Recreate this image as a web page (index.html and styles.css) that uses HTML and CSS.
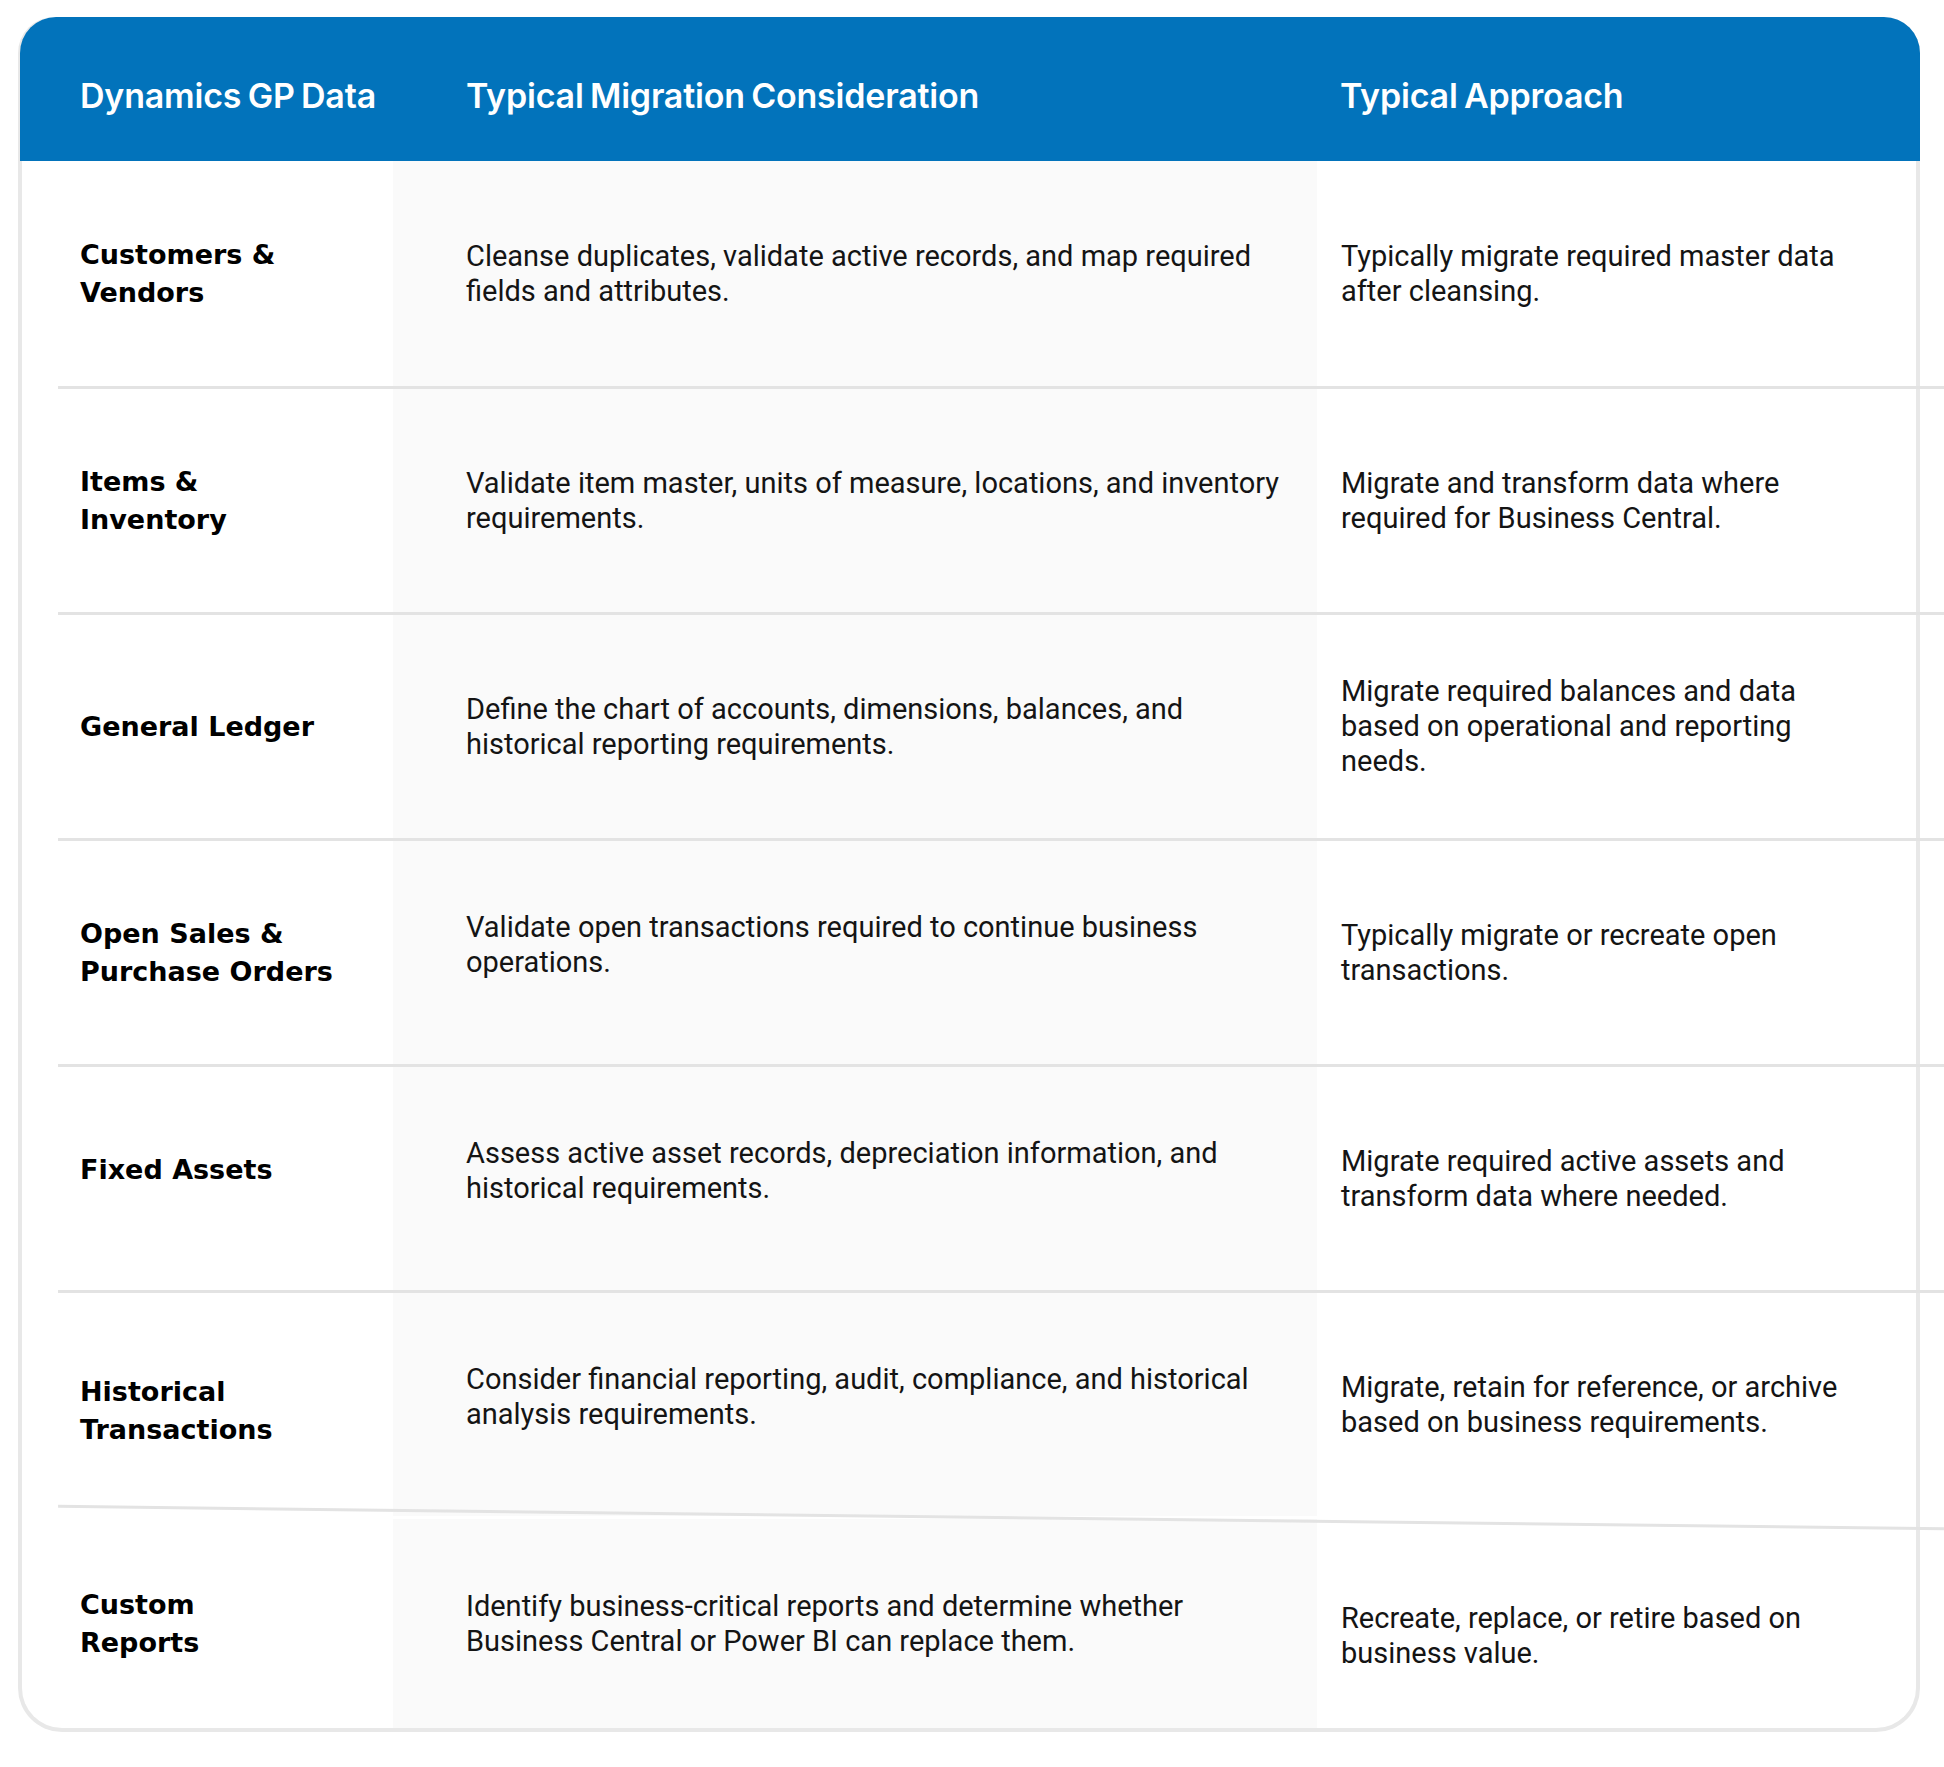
FILE: index.html
```html
<!DOCTYPE html>
<html lang="en">
<head>
<meta charset="utf-8">
<title>Dynamics GP Data Migration</title>
<link rel="stylesheet" href="styles.css">
</head>
<body>
<div class="card">
  <div class="thead">
    <div class="th th-1">Dynamics GP Data</div>
    <div class="th th-2">Typical Migration Consideration</div>
    <div class="th th-3">Typical Approach</div>
  </div>

  <div class="row row-first">
    <div class="cell c1">Customers &amp; Vendors</div>
    <div class="cell c2">Cleanse duplicates, validate active records, and map required fields and attributes.</div>
    <div class="cell c3">Typically migrate required master data after cleansing.</div>
  </div>
  <div class="divider"></div>

  <div class="row">
    <div class="cell c1">Items &amp; Inventory</div>
    <div class="cell c2">Validate item master, units of measure, locations, and inventory requirements.</div>
    <div class="cell c3">Migrate and transform data where required for Business Central.</div>
  </div>
  <div class="divider"></div>

  <div class="row">
    <div class="cell c1">General Ledger</div>
    <div class="cell c2">Define the chart of accounts, dimensions, balances, and historical reporting requirements.</div>
    <div class="cell c3">Migrate required balances and data based on operational and reporting needs.</div>
  </div>
  <div class="divider"></div>

  <div class="row">
    <div class="cell c1">Open Sales &amp; Purchase Orders</div>
    <div class="cell c2 up">Validate open transactions required to continue business operations.</div>
    <div class="cell c3">Typically migrate or recreate open transactions.</div>
  </div>
  <div class="divider"></div>

  <div class="row">
    <div class="cell c1 up-more">Fixed Assets</div>
    <div class="cell c2 up">Assess active asset records, depreciation information, and historical requirements.</div>
    <div class="cell c3">Migrate required active assets and transform data where needed.</div>
  </div>
  <div class="divider"></div>

  <div class="row">
    <div class="cell c1 down">Historical Transactions</div>
    <div class="cell c2 up">Consider financial reporting, audit, compliance, and historical analysis requirements.</div>
    <div class="cell c3">Migrate, retain for reference, or archive based on business requirements.</div>
  </div>
  <div class="divider divider-tilt"></div>

  <div class="row row-last">
    <div class="cell c1">Custom<br>Reports</div>
    <div class="cell c2">Identify business-critical reports and determine whether Business Central or Power BI can replace them.</div>
    <div class="cell c3 down-more">Recreate, replace, or retire based on business value.</div>
  </div>
</div>
</body>
</html>
```

FILE: styles.css
```css
html, body {
  margin: 0;
  padding: 0;
  background: #ffffff;
  overflow: hidden;
}

body {
  width: 1944px;
  height: 1767px;
  font-family: Roboto, "Liberation Sans", Arial, sans-serif;
  color: #111111;
}

.card {
  box-sizing: border-box;
  width: 1902px;
  margin: 17px 0 0 18px;
  border: 4px solid #e8e8e8;
  border-top: 0;
  border-radius: 36px 36px 44px 44px;
  background: #ffffff;
}

.thead {
  display: grid;
  grid-template-columns: 373px 924px 1fr;
  height: 144px;
  margin: 0 -4px 0 -2px;
  background: #0273bb;
  border-radius: 36px 36px 0 0;
  align-items: center;
}

.th {
  color: #ffffff;
  font-family: Inter, "Noto Sans", sans-serif;
  font-weight: 600;
  font-size: 34px;
  letter-spacing: -0.2px;
  word-spacing: -2px;
  padding-top: 12px;
}

.th-1 { padding-left: 60px; }
.th-2 { padding-left: 73px; }
.th-3 { padding-left: 23px; }

.row {
  display: grid;
  grid-template-columns: 371px 924px 1fr;
  height: 223px;
}

.row-first { height: 225px; }
.row-last { height: 209px; }

.cell {
  box-sizing: border-box;
  display: flex;
  align-items: center;
}

.c1 {
  padding: 0 51px 0 58px;
  font-family: "DejaVu Sans", Verdana, sans-serif;
  font-weight: 700;
  font-size: 27px;
  line-height: 38px;
  color: #000000;
}

.c2 {
  padding: 0 26px 0 73px;
  background: #fafafa;
  font-size: 29px;
  line-height: 35px;
  color: #141414;
}

.c3 {
  padding: 0 60px 0 24px;
  font-size: 29px;
  line-height: 35px;
  color: #141414;
}

/* small vertical nudges seen in the reference */
.cell.up { padding-bottom: 15px; }
.cell.up-more { padding-bottom: 18px; }
.cell.down { padding-top: 12px; }
.cell.down-more { padding-top: 25px; }

.divider {
  height: 3px;
  margin: 0 -28px 0 36px;
  background: #e3e3e3;
}

.divider-tilt {
  transform: rotate(0.68deg);
  transform-origin: 50% 50%;
}
```
